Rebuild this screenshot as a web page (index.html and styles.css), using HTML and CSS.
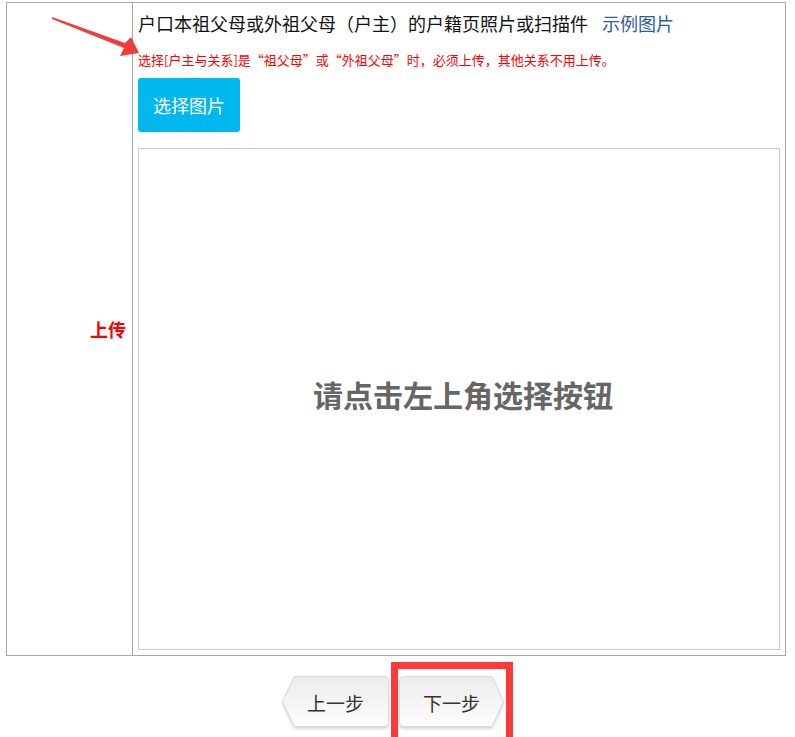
FILE: index.html
```html
<!DOCTYPE html>
<html lang="zh-CN">
<head>
<meta charset="utf-8">
<title>上传</title>
<link rel="stylesheet" href="styles.css">
</head>
<body>
<div class="wrap">
  <table class="form">
    <tr>
      <td class="label">上传</td>
      <td class="field">
        <div class="title">户口本祖父母或外祖父母（户主）的户籍页照片或扫描件<a class="sample" href="#">示例图片</a></div>
        <div class="note">选择[户主与关系]是“祖父母”或“外祖父母”时，必须上传，其他关系不用上传。</div>
        <button class="pick" type="button">选择图片</button>
        <div class="preview"><span>请点击左上角选择按钮</span></div>
      </td>
    </tr>
  </table>
  <div class="steps">
    <a class="step prev" href="#">
      <svg class="shape" width="107" height="52" viewBox="0 0 107 52">
        <defs><linearGradient id="gp" x1="0" y1="0" x2="0" y2="1"><stop offset="0" stop-color="#ececec"/><stop offset="1" stop-color="#fdfdfd"/></linearGradient></defs>
        <path d="M12.5,0.5 H102.5 Q106.5,0.5 106.5,4.5 V46.5 Q106.5,50.5 102.5,50.5 H12.5 L0.5,25.5 Z" fill="url(#gp)" stroke="#dadada"/>
      </svg>
      <span class="txt">上一步</span>
    </a>
    <span class="mark">
      <a class="step next" href="#">
        <svg class="shape" width="105" height="52" viewBox="0 0 105 52">
          <defs><linearGradient id="gn" x1="0" y1="0" x2="0" y2="1"><stop offset="0" stop-color="#ececec"/><stop offset="1" stop-color="#fdfdfd"/></linearGradient></defs>
          <path d="M0.5,4.5 Q0.5,0.5 4.5,0.5 H93 L104.5,25.5 L93,50.5 H4.5 Q0.5,50.5 0.5,46.5 Z" fill="url(#gn)" stroke="#dadada"/>
        </svg>
        <span class="txt">下一步</span>
      </a>
    </span>
  </div>
</div>
<svg class="arrow" width="150" height="70" viewBox="0 0 150 70">
  <path d="M52,17 L125,43 L131,37 L139,53 L120,56 L124,48 L52,19 Z" fill="#f23c3c"/>
</svg>
</body>
</html>
```
FILE: styles.css
```css
html, body {
  margin: 0;
  padding: 0;
  height: 737px;
  overflow: hidden;
  background: #fff;
}
body {
  position: relative;
  font-family: "Noto Sans CJK SC", "Noto Sans", sans-serif;
  color: #111;
}
.wrap {
  padding: 2px 9px 0 6px;
}
.form {
  width: 780px;
  border-collapse: collapse;
  border: 1px solid #a8a8a8;
}
.form td {
  border: 1px solid #a8a8a8;
  padding: 0;
}
.label {
  width: 119px;
  padding-right: 6px !important;
  text-align: right;
  vertical-align: middle;
  color: #ff0000;
  font-weight: bold;
  font-size: 18px;
}
.field {
  padding: 5px 5px 5px 5px !important;
  vertical-align: top;
}
.title {
  font-size: 18px;
  line-height: 30px;
  color: #111;
  white-space: nowrap;
}
.sample {
  margin-left: 14px;
  color: #2b5f96;
  text-decoration: none;
}
.note {
  margin-top: 12px;
  font-size: 13px;
  line-height: 20px;
  color: #ff0000;
  white-space: nowrap;
}
.pick {
  display: block;
  margin-top: 8px;
  width: 102px;
  height: 54px;
  padding: 0;
  border: none;
  border-radius: 3px;
  background: #00b7ee;
  color: #fff;
  font-family: inherit;
  font-size: 18px;
}
.preview {
  margin-top: 16px;
  height: 500px;
  border: 1px solid #cccccc;
  display: flex;
  align-items: center;
  justify-content: center;
}
.preview span {
  font-size: 30px;
  font-weight: bold;
  color: #666;
  margin-left: 8px;
  margin-top: -10px;
}
.steps {
  display: flex;
  justify-content: center;
  align-items: flex-start;
  gap: 2px;
  margin-top: 6px;
  margin-left: -6px;
  margin-right: -9px;
}
.step {
  position: relative;
  display: flex;
  align-items: center;
  justify-content: center;
  height: 52px;
  color: #333;
  text-decoration: none;
  font-size: 19px;
}
.step .shape {
  position: absolute;
  left: 0;
  top: 0;
  filter: drop-shadow(0 2px 1.5px rgba(0, 0, 0, 0.16));
}
.step .txt {
  position: relative;
}
.prev {
  width: 107px;
  margin-top: 14px;
}
.next {
  width: 105px;
}
.mark {
  display: block;
  border-style: solid;
  border-color: #fd3a3a;
  border-width: 7px 7px 7px 7px;
  padding: 7px 2px 20px 1px;
  background: #fff;
}
.arrow {
  position: absolute;
  left: 0;
  top: 0;
}
```
